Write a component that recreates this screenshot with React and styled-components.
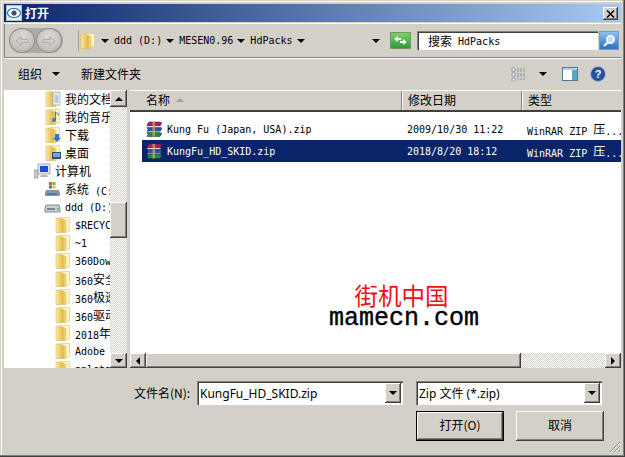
import React from "react";
import styled, { createGlobalStyle } from "styled-components";

const GlobalStyle = createGlobalStyle`
  html, body { margin: 0; padding: 0; background: #d4d0c8; }
  * { box-sizing: border-box; }
`;

const MONO = `"DejaVu Sans Mono", "Liberation Mono", monospace`;
const CJK = `"Noto Sans CJK SC", "Noto Sans", sans-serif`;
const raised = `box-shadow: inset -1px -1px 0 #404040, inset 1px 1px 0 #fff, inset -2px -2px 0 #808080;`;
const sunken = `box-shadow: inset 1px 1px 0 #808080, inset 2px 2px 0 #404040, inset -1px -1px 0 #fff;`;
const dither = `
  background-color: #fff;
  background-image: conic-gradient(#d4d0c8 25%, #fff 0 50%, #d4d0c8 0 75%, #fff 0);
  background-size: 2px 2px;
`;

const Window = styled.div`
  position: relative;
  width: 625px;
  height: 457px;
  padding: 4px;
  display: flex;
  flex-direction: column;
  overflow: hidden;
  background: #d4d0c8;
  font-family: ${MONO};
  font-size: 10px;
  color: #000;
  box-shadow: inset -1px -1px 0 #404040, inset -2px -2px 0 #808080, inset 1px 1px 0 #d4d0c8, inset 2px 2px 0 #fff;
`;

const TitleBar = styled.div`
  height: 18px;
  flex: none;
  display: flex;
  align-items: center;
  padding: 0 3px 0 2px;
  background: linear-gradient(90deg, #0a246a, #a6caf0);
`;

const TitleText = styled.span`
  margin-left: 3px;
  margin-bottom: 2px;
  font-family: ${CJK};
  font-size: 12px;
  font-weight: 700;
  color: #fff;
  flex: 1;
`;

const CloseButton = styled.div`
  width: 15px;
  height: 13px;
  margin-top: 1px;
  display: flex;
  align-items: center;
  justify-content: center;
  background: #d4d0c8;
  ${raised}
`;

const AddressBar = styled.div`
  height: 35px;
  flex: none;
  margin-top: 1px;
  display: flex;
  align-items: flex-start;
  border-top: 1px solid #fff;
  border-bottom: 1px solid #808080;
  box-shadow: inset 1px 0 0 #808080, 0 1px 0 #fff;
`;

const NavCapsule = styled.div`
  width: 54px;
  height: 25px;
  margin: 4px 0 0 5px;
  display: flex;
  gap: 1px;
  border-radius: 12px;
  background: #aeaba5;
`;

const NavButton = styled.div`
  width: 26px;
  height: 25px;
  border-radius: 50%;
  display: flex;
  align-items: center;
  justify-content: center;
  background: radial-gradient(circle at 50% 35%, #dddbd7, #c6c3bd 62%, #9f9c96);
  border: 1px solid #8f8c86;
`;

const Breadcrumb = styled.div`
  width: 308px;
  height: 21px;
  margin: 6px 0 0 15px;
  padding-left: 1px;
  display: flex;
  align-items: center;
  border-left: 1px solid #a5a29b;
`;

const CrumbText = styled.span`
  margin: 0 4px 0 5px;
  white-space: pre;
`;

const RefreshButton = styled.div`
  width: 21px;
  height: 17px;
  margin: 8px 0 0 4px;
  display: flex;
  align-items: center;
  justify-content: center;
  border: 1px solid #6c9a62;
  background: linear-gradient(#7fcf6a, #2f9a35);
`;

const SearchBox = styled.div`
  width: 181px;
  height: 19px;
  margin: 7px 0 0 6px;
  padding: 1px 0 0 11px;
  display: flex;
  align-items: center;
  background: #fff;
  white-space: pre;
  ${sunken}
`;

const SearchButton = styled.div`
  width: 20px;
  height: 19px;
  margin: 7px 0 0 1px;
  display: flex;
  align-items: center;
  justify-content: center;
  border: 1px solid #7d9cc4;
  background: linear-gradient(#8fc1f0, #2c6fc4);
`;

const Cn = styled.span`
  display: inline-block;
  font-family: ${CJK};
  font-size: 12px;
  line-height: 14px;
  vertical-align: 1px;
`;

const Toolbar = styled.div`
  height: 32px;
  flex: none;
  display: flex;
  align-items: center;
  padding: 0 15px 0 14px;
`;

const ToolText = styled.span`
  font-family: ${CJK};
  font-size: 12px;
  margin-bottom: 2px;
`;

const Spacer = styled.div`
  flex: 1;
`;

const ToolIcon = styled.span`
  display: flex;
  margin-left: ${(p) => p.$gap || 0}px;
`;

const Caret = styled.span`
  display: block;
  flex: none;
  width: 0;
  height: 0;
  border-left: 4px solid transparent;
  border-right: 4px solid transparent;
  border-top: 4px solid ${(p) => p.$color || "#000"};
  margin-left: ${(p) => p.$gap || 0}px;
  margin-right: ${(p) => p.$after || 0}px;
`;

const CaretUp = styled(Caret)`
  transform: rotate(180deg);
`;

const Main = styled.div`
  height: 278px;
  flex: none;
  display: flex;
`;

const TreePane = styled.div`
  width: 123px;
  flex: none;
  display: flex;
  background: #fff;
`;

const TreeList = styled.div`
  flex: 1;
  min-width: 0;
  overflow: hidden;
`;

const TreeRow = styled.div`
  height: 18px;
  display: flex;
  align-items: center;
  gap: ${(p) => p.$gap || 4}px;
  padding-left: ${(p) => p.$indent}px;
  white-space: nowrap;
`;

const Splitter = styled.div`
  width: 3px;
  flex: none;
`;

const VScroll = styled.div`
  width: 17px;
  flex: none;
  display: flex;
  flex-direction: column;
  ${dither}
`;

const ScrollButton = styled.div`
  flex: none;
  width: ${(p) => p.$w || 17}px;
  height: ${(p) => p.$h || 15}px;
  display: flex;
  align-items: center;
  justify-content: center;
  background: #d4d0c8;
  ${raised}
`;

const VThumb = styled.div`
  height: 36px;
  flex: none;
  margin-top: 95px;
  background: #d4d0c8;
  ${raised}
`;

const Fill = styled.div`
  flex: 1;
`;

const Tri = styled.span`
  display: block;
  width: 0;
  height: 0;
  ${(p) => p.$dir === "up" && `border-left: 4px solid transparent; border-right: 4px solid transparent; border-bottom: 4px solid #000;`}
  ${(p) => p.$dir === "down" && `border-left: 4px solid transparent; border-right: 4px solid transparent; border-top: 4px solid #000;`}
  ${(p) => p.$dir === "left" && `border-top: 4px solid transparent; border-bottom: 4px solid transparent; border-right: 4px solid #000;`}
  ${(p) => p.$dir === "right" && `border-top: 4px solid transparent; border-bottom: 4px solid transparent; border-left: 4px solid #000;`}
`;

const ListPane = styled.div`
  flex: 1;
  display: flex;
  flex-direction: column;
  min-width: 0;
  background: #fff;
`;

const Header = styled.div`
  height: 22px;
  flex: none;
  display: grid;
  grid-template-columns: 271px 120px 100px;
  background: #d4d0c8;
  border-top: 1px solid #fff;
  border-bottom: 2px solid #404040;
`;

const HeaderCell = styled.div`
  display: flex;
  align-items: center;
  gap: 6px;
  padding: 0 0 2px ${(p) => p.$pad}px;
  font-family: ${CJK};
  font-size: 12px;
  border-left: ${(p) => (p.$first ? "0" : "1px solid #808080")};
  box-shadow: ${(p) => (p.$first ? "none" : "inset 1px 0 0 #fff")};
`;

const FileArea = styled.div`
  flex: 1;
  padding: 6px 0 0 12px;
`;

const FileRow = styled.div`
  height: 22px;
  display: grid;
  grid-template-columns: 259px 120px 100px;
  align-items: center;
  white-space: nowrap;
  overflow: hidden;
  background: ${(p) => (p.$selected ? "#0a246a" : "transparent")};
  color: ${(p) => (p.$selected ? "#fff" : "#000")};
`;

const NameCell = styled.div`
  display: flex;
  align-items: center;
  gap: 5px;
  padding-left: 4px;
`;

const DateCell = styled.div`
  padding-left: 6px;
`;

const HScroll = styled.div`
  height: 15px;
  flex: none;
  display: flex;
  ${dither}
`;

const HThumb = styled.div`
  width: 375px;
  flex: none;
  background: #d4d0c8;
  ${raised}
`;

const Footer = styled.div`
  flex: 1;
  padding: 13px 0 0 130px;
  font-family: "Noto Sans", ${CJK};
  font-size: 12px;
`;

const FieldRow = styled.div`
  display: flex;
  align-items: center;
  height: 24px;
`;

const FieldLabel = styled.label`
  width: 63px;
  flex: none;
  margin-bottom: 2px;
  font-family: ${CJK};
  font-size: 12px;
`;

const Combo = styled.div`
  width: ${(p) => p.$w}px;
  height: 24px;
  flex: none;
  margin-right: 13px;
  padding: 2px 2px 2px 2px;
  display: flex;
  align-items: center;
  background: #fff;
  ${sunken}
`;

const ComboText = styled.span`
  flex: 1;
  padding-left: 1px;
`;

const ComboArrow = styled.div`
  width: 16px;
  height: 20px;
  display: flex;
  align-items: center;
  justify-content: center;
  background: #d4d0c8;
  ${raised}
`;

const ButtonRow = styled.div`
  display: flex;
  gap: 12px;
  margin: 6px 0 0 282px;
`;

const DialogButton = styled.div`
  width: 88px;
  height: 30px;
  padding-bottom: 3px;
  display: flex;
  align-items: center;
  justify-content: center;
  font-family: ${CJK};
  font-size: 12px;
  background: #d4d0c8;
  ${raised}
  ${(p) => p.$primary && `outline: 1px solid #000; outline-offset: -1px; box-shadow: inset -2px -2px 0 #404040, inset 2px 2px 0 #fff, inset -3px -3px 0 #808080;`}
`;

const Grip = styled.svg`
  position: absolute;
  right: 4px;
  bottom: 4px;
`;

const Watermark = styled.div`
  position: absolute;
  left: 329px;
  top: 280px;
  width: 150px;
  text-align: center;
  pointer-events: none;
`;

const WatermarkCn = styled.div`
  padding-right: 5px;
  font-family: ${CJK};
  font-size: 23.5px;
  line-height: 30px;
  color: #f01010;
`;

const WatermarkEn = styled.div`
  font-family: "Liberation Mono", monospace;
  font-size: 25px;
  line-height: 18px;
  color: #000;
  -webkit-text-stroke: 0.4px #000;
`;

const FolderGradients = () => (
  <svg width="0" height="0" style={{ position: "absolute" }}>
    <defs>
      <linearGradient id="folderFront" x1="0" x2="1" y1="0" y2="0">
        <stop offset="0" stopColor="#fbeea8" />
        <stop offset=".35" stopColor="#f0cf6c" />
        <stop offset=".7" stopColor="#e3b94a" />
        <stop offset="1" stopColor="#f6e296" />
      </linearGradient>
    </defs>
  </svg>
);

const FolderIcon = ({ overlay }) => (
  <svg width="16" height="16" viewBox="0 0 16 16" style={{ flex: "none" }}>
    <path d="M5 .5h9.500V14H5z" fill="#fdf6cc" stroke="#d9c47a" strokeWidth=".6" />
    <path d="M1 1h3.500l6.500 2.500V15.500H1z" fill="url(#folderFront)" stroke="#d3ae4c" strokeWidth=".5" />
    {overlay === "doc" && (
      <>
        <rect x="8" y="2" width="7" height="12" fill="#f4f7fb" stroke="#7f93ad" strokeWidth=".6" />
        <path d="M9.500 5h4M9.500 7h4M9.500 9h4M9.500 11h4" stroke="#5b80b8" strokeWidth=".8" />
      </>
    )}
    {overlay === "music" && <path d="M11 3v8a2 2 0 1 1-1-1.700V2l4 3v2z" fill="#2d7fd0" />}
    {overlay === "down" && <path d="M10 7h4v4h2l-4 4-4-4h2z" fill="#2c78cf" />}
    {overlay === "desk" && (
      <>
        <rect x="7" y="7" width="9" height="7" fill="#33506e" />
        <rect x="8" y="8" width="7" height="4" fill="#6fa8dc" />
      </>
    )}
  </svg>
);

const ComputerIcon = () => (
  <svg width="17" height="16" viewBox="0 0 17 16" style={{ flex: "none" }}>
    <rect x="0" y="7" width="4" height="8" fill="#c8ccd2" stroke="#77808a" strokeWidth=".6" />
    <rect x="4" y="1" width="12" height="10" fill="#e4e7ea" stroke="#8a929c" strokeWidth=".7" />
    <rect x="6" y="3" width="8" height="6" fill="#1550d8" />
    <path d="M7 12h6l1 2H6z" fill="#b3b8bf" />
  </svg>
);

const DriveCIcon = () => (
  <svg width="17" height="16" viewBox="0 0 17 16" style={{ flex: "none" }}>
    <path d="M5 1h3v3H5z" fill="#e2552b" />
    <path d="M8.500 1h3v3h-3z" fill="#7bb733" />
    <path d="M5 4.500h3v3H5z" fill="#2d7ad6" />
    <path d="M8.500 4.500h3v3h-3z" fill="#f3c11c" />
    <path d="M2 9h13l1 3v3H1v-3z" fill="#8d949c" />
    <rect x="3" y="12" width="10" height="2" fill="#3a7ec2" />
  </svg>
);

const DriveIcon = () => (
  <svg width="17" height="16" viewBox="0 0 17 16" style={{ flex: "none" }}>
    <path d="M2 6h13l1 3v4H1V9z" fill="#c9ced3" stroke="#6d747b" strokeWidth=".8" />
    <rect x="3" y="9" width="8" height="2" fill="#7f878f" />
    <rect x="13" y="9" width="1.500" height="2" fill="#55c04f" />
  </svg>
);

const RarIcon = () => (
  <svg width="16" height="16" viewBox="0 0 16 16" style={{ flex: "none" }}>
    <path d="M3 1h11l2 1-2 3H1l1-3z" fill="#a8206e" stroke="#3a1030" strokeWidth=".5" />
    <path d="M1 5h14l-1 1.500H2z" fill="#efe6d8" />
    <path d="M1 6.500h14l1 1-2 3H1l1-2z" fill="#2c4fb0" stroke="#10204d" strokeWidth=".5" />
    <path d="M1 10.500h14l-1 1H2z" fill="#eef2fa" />
    <path d="M1 11.500h13l2 1-2 3H1l1-2z" fill="#1f8a4c" stroke="#0d3a20" strokeWidth=".5" />
    <path d="M6.500 1h2.500v14.500H6.500z" fill="#d9b24a" opacity=".7" />
  </svg>
);

const ArrowGlyph = ({ flip }) => (
  <svg width="14" height="12" viewBox="0 0 14 12" style={flip ? { transform: "scaleX(-1)" } : undefined}>
    <path d="M1 6 6 1.500V4.500h7v3H6v3z" fill="#d2d0cc" stroke="#a5a29c" strokeWidth=".8" />
  </svg>
);

const tree = [
  { label: "我的文档", indent: 41, icon: <FolderIcon overlay="doc" /> },
  { label: "我的音乐", indent: 41, icon: <FolderIcon overlay="music" /> },
  { label: "下载", indent: 41, icon: <FolderIcon overlay="down" /> },
  { label: "桌面", indent: 41, icon: <FolderIcon overlay="desk" /> },
  { label: "计算机", indent: 30, icon: <ComputerIcon /> },
  { label: "系统 (C:)", indent: 40, icon: <DriveCIcon /> },
  { label: "ddd (D:)", indent: 40, icon: <DriveIcon />, mono: true },
  { label: "$RECYCLE.BIN", indent: 51, icon: <FolderIcon />, mono: true },
  { label: "~1", indent: 51, icon: <FolderIcon />, mono: true },
  { label: "360Downloads", indent: 51, icon: <FolderIcon />, mono: true },
  { label: "360", rest: "安全", indent: 51, icon: <FolderIcon /> },
  { label: "360", rest: "极速", indent: 51, icon: <FolderIcon /> },
  { label: "360", rest: "驱动", indent: 51, icon: <FolderIcon /> },
  { label: "2018", rest: "年", indent: 51, icon: <FolderIcon /> },
  { label: "Adobe", indent: 51, icon: <FolderIcon />, mono: true },
  { label: "aplsta", indent: 51, icon: <FolderIcon />, mono: true },
];

const TreeLabel = ({ item }) => {
  if (item.rest) {
    return (
      <span>
        {item.label}
        <Cn>{item.rest}</Cn>
      </span>
    );
  }
  if (item.mono) return <span>{item.label}</span>;
  if (item.label.startsWith("系统")) {
    return (
      <span>
        <Cn>系统</Cn> (C:)
      </span>
    );
  }
  return <Cn>{item.label}</Cn>;
};

const files = [
  { name: "Kung Fu (Japan, USA).zip", date: "2009/10/30 11:22" },
  { name: "KungFu_HD_SKID.zip", date: "2018/8/20 18:12", selected: true },
];

export default function App() {
  return (
    <>
      <GlobalStyle />
      <FolderGradients />
      <Window>
        <TitleBar>
          <svg width="16" height="16" viewBox="0 0 16 16">
            <rect x=".5" y=".5" width="15" height="15" fill="#e8f1fa" stroke="#9fc0e0" />
            <ellipse cx="8" cy="8" rx="6.500" ry="4.500" fill="#fff" stroke="#2e6fae" strokeWidth="1.200" />
            <circle cx="8" cy="8" r="2.600" fill="#3d4f66" />
          </svg>
          <TitleText>打开</TitleText>
          <CloseButton>
            <svg width="9" height="8" viewBox="0 0 9 8">
              <path d="M1 0.500 8 7.500M8 0.500 1 7.500" stroke="#000" strokeWidth="1.500" />
            </svg>
          </CloseButton>
        </TitleBar>

        <AddressBar>
          <NavCapsule>
            <NavButton><ArrowGlyph /></NavButton>
            <NavButton><ArrowGlyph flip /></NavButton>
          </NavCapsule>
          <Breadcrumb>
            <FolderIcon />
            <Caret $gap={5} />
            <CrumbText>ddd (D:)</CrumbText>
            <Caret />
            <CrumbText>MESEN0.96</CrumbText>
            <Caret />
            <CrumbText>HdPacks</CrumbText>
            <Caret />
            <Spacer />
            <Caret $after={6} />
          </Breadcrumb>
          <RefreshButton>
            <svg width="15" height="11" viewBox="0 0 15 11">
              <path d="M1 4 5 1v2h3v2H5v2zM14 7l-4 3V8H7V6h3V4z" fill="#fff" />
            </svg>
          </RefreshButton>
          <SearchBox>
            <Cn>搜索</Cn> HdPacks
          </SearchBox>
          <SearchButton>
            <svg width="14" height="14" viewBox="0 0 14 14">
              <circle cx="8.500" cy="5.500" r="3.700" fill="#bfe0fa" stroke="#fff" strokeWidth="1.600" />
              <path d="M6 8 2 12" stroke="#fff" strokeWidth="2.200" />
            </svg>
          </SearchButton>
        </AddressBar>

        <Toolbar>
          <ToolText>组织</ToolText>
          <Caret $gap={10} $after={21} />
          <ToolText>新建文件夹</ToolText>
          <Spacer />
          <ToolIcon>
            <svg width="16" height="14" viewBox="0 0 16 14">
              <path d="M1 1h3v3H1zM1 6h3v3H1zM1 11h3v3H1z" fill="#fff" stroke="#7a8794" strokeWidth=".8" />
              <path d="M6 2h9M6 4h9M6 7h9M6 9h9M6 12h9" stroke="#8a96a3" strokeDasharray="2 1" />
            </svg>
          </ToolIcon>
          <Caret $gap={12} />
          <ToolIcon $gap={15}>
            <svg width="16" height="14" viewBox="0 0 16 14">
              <rect x=".5" y=".5" width="15" height="13" fill="#fff" stroke="#54768f" />
              <rect x="1" y="1" width="14" height="2" fill="#b4d3ea" />
              <rect x="10" y="3" width="5" height="10" fill="#5fa3cf" />
            </svg>
          </ToolIcon>
          <ToolIcon $gap={12}>
            <svg width="16" height="16" viewBox="0 0 16 16">
              <circle cx="8" cy="8" r="7.500" fill="#24509e" stroke="#9fb8dc" />
              <text x="8" y="12" textAnchor="middle" fontSize="11" fontWeight="700" fontFamily="Liberation Sans" fill="#fff">?</text>
            </svg>
          </ToolIcon>
        </Toolbar>

        <Main>
          <TreePane>
            <TreeList>
              {tree.map((item) => (
                <TreeRow key={item.label + (item.rest || "")} $indent={item.indent}>
                  {item.icon}
                  <TreeLabel item={item} />
                </TreeRow>
              ))}
            </TreeList>
            <VScroll>
              <ScrollButton $h={17}><Tri $dir="up" /></ScrollButton>
              <VThumb />
              <Fill />
              <ScrollButton><Tri $dir="down" /></ScrollButton>
            </VScroll>
          </TreePane>
          <Splitter />
          <ListPane>
            <Header>
              <HeaderCell $first $pad={16}>
                名称
                <CaretUp $color="#a5a29b" />
              </HeaderCell>
              <HeaderCell $pad={6}>修改日期</HeaderCell>
              <HeaderCell $pad={6}>类型</HeaderCell>
            </Header>
            <FileArea>
              {files.map((f) => (
                <FileRow key={f.name} $selected={f.selected}>
                  <NameCell>
                    <RarIcon />
                    {f.name}
                  </NameCell>
                  <DateCell>{f.date}</DateCell>
                  <DateCell>WinRAR ZIP <Cn>压</Cn>...</DateCell>
                </FileRow>
              ))}
            </FileArea>
            <HScroll>
              <ScrollButton $w={16}><Tri $dir="left" /></ScrollButton>
              <HThumb />
              <Fill />
              <ScrollButton $w={16}><Tri $dir="right" /></ScrollButton>
            </HScroll>
          </ListPane>
        </Main>

        <Footer>
          <FieldRow>
            <FieldLabel>文件名(N):</FieldLabel>
            <Combo $w={206}>
              <ComboText>KungFu_HD_SKID.zip</ComboText>
              <ComboArrow><Tri $dir="down" /></ComboArrow>
            </Combo>
            <Combo $w={186}>
              <ComboText>Zip 文件 (*.zip)</ComboText>
              <ComboArrow><Tri $dir="down" /></ComboArrow>
            </Combo>
          </FieldRow>
          <ButtonRow>
            <DialogButton $primary>打开(O)</DialogButton>
            <DialogButton>取消</DialogButton>
          </ButtonRow>
        </Footer>

        <Watermark>
          <WatermarkCn>街机中国</WatermarkCn>
          <WatermarkEn>mamecn.com</WatermarkEn>
        </Watermark>

        <Grip width="13" height="13" viewBox="0 0 13 13">
          <path d="M12 2 2 12M12 6 6 12M12 10 10 12" stroke="#808080" strokeWidth="1" />
          <path d="M12 3 3 12M12 7 7 12M12 11 11 12" stroke="#fff" strokeWidth="1" />
        </Grip>
      </Window>
    </>
  );
}
